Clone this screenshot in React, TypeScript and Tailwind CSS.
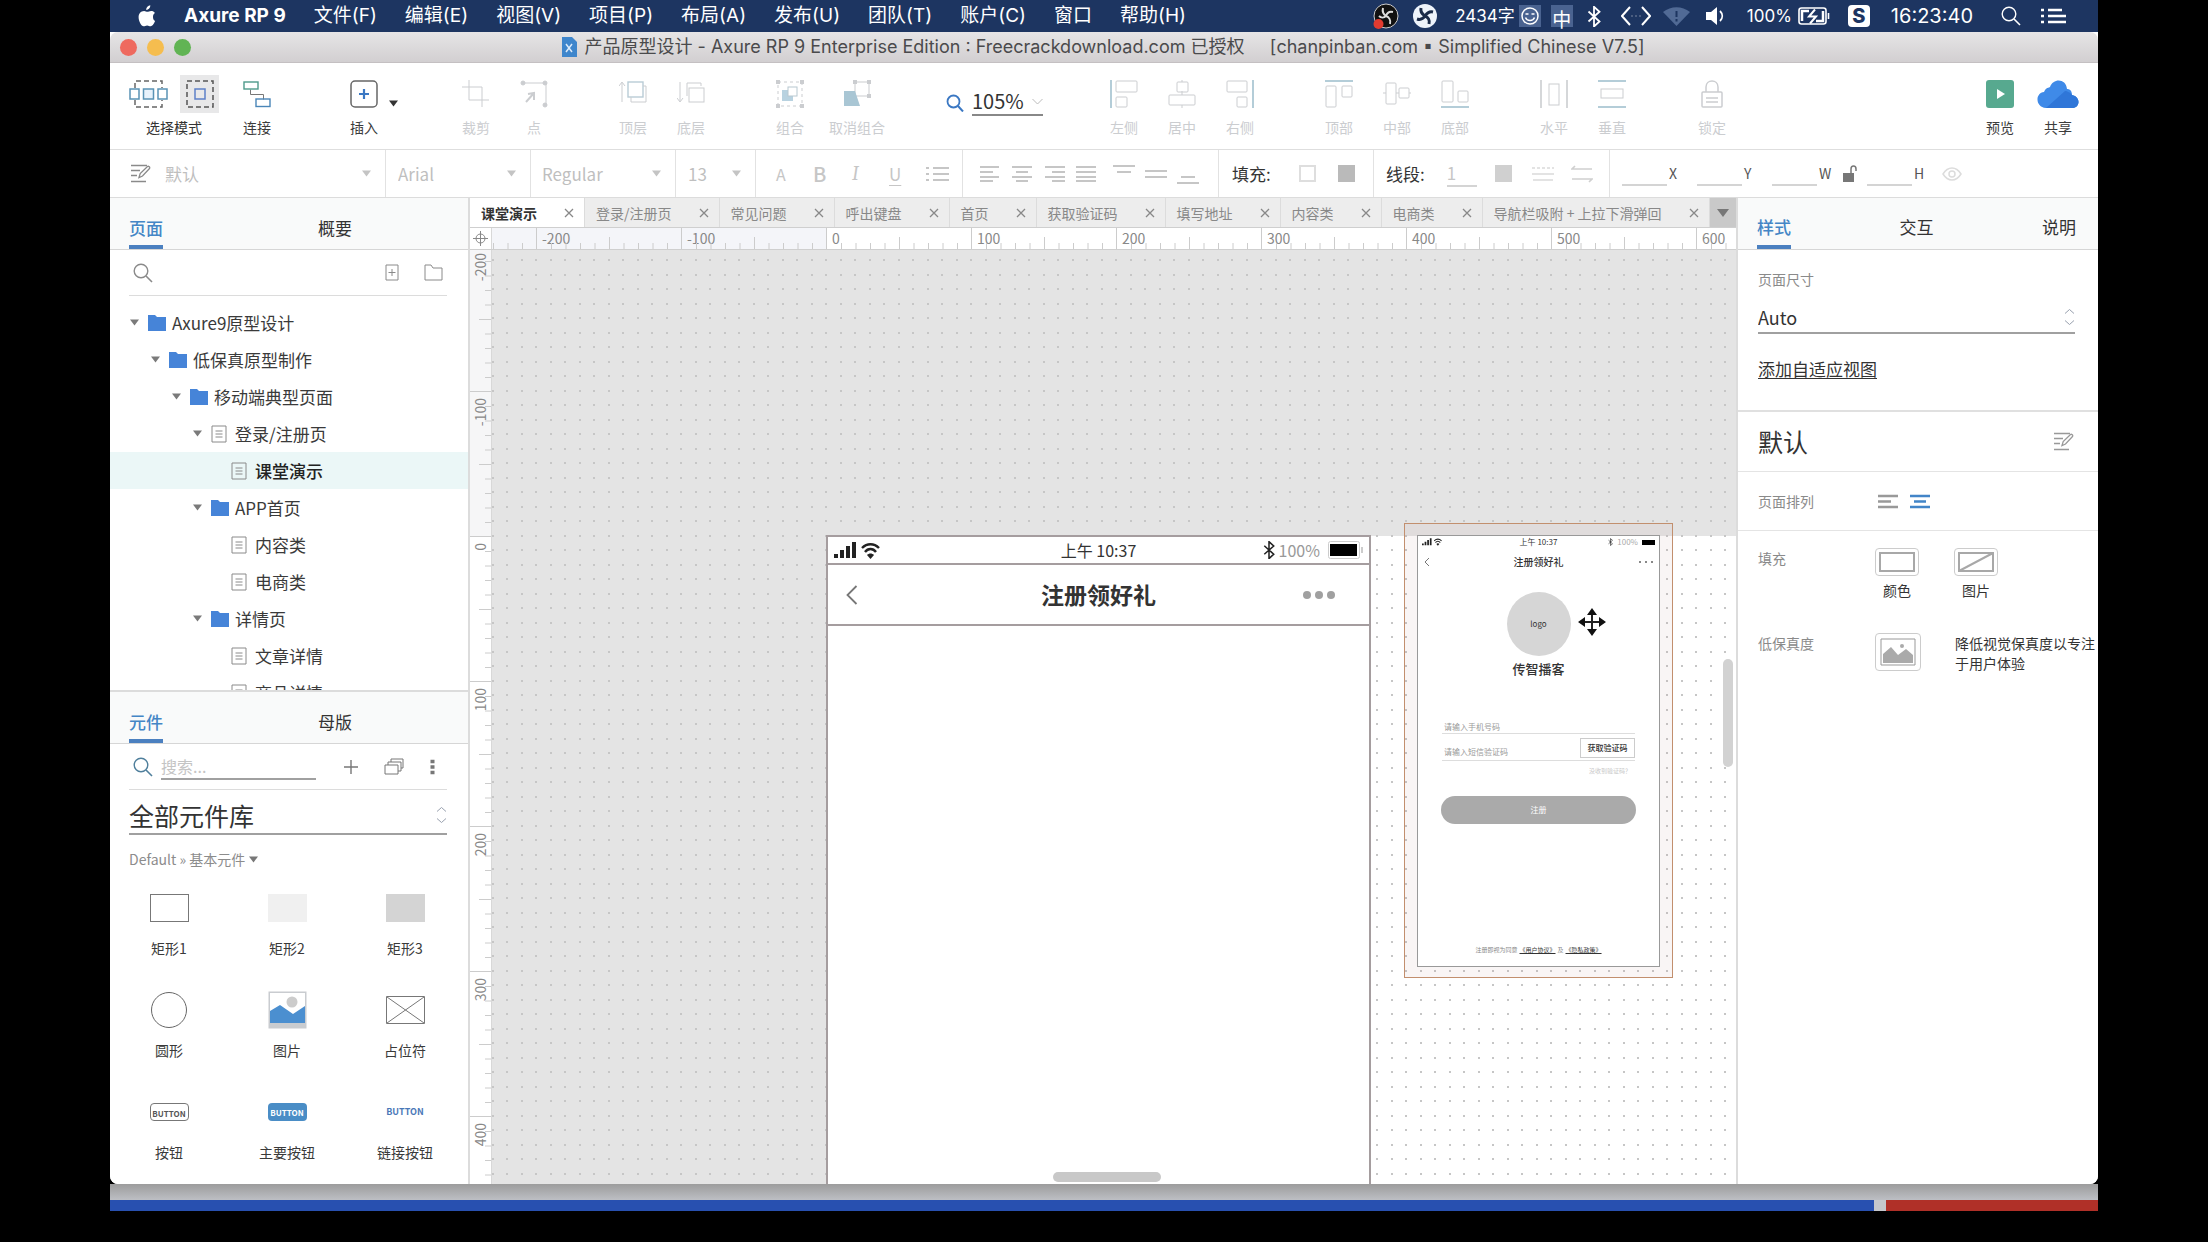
import type { ReactNode } from "react";

const menus = [
  "文件(F)",
  "编辑(E)",
  "视图(V)",
  "项目(P)",
  "布局(A)",
  "发布(U)",
  "团队(T)",
  "账户(C)",
  "窗口",
  "帮助(H)",
];

const tabs = [
  "课堂演示",
  "登录/注册页",
  "常见问题",
  "呼出键盘",
  "首页",
  "获取验证码",
  "填写地址",
  "内容类",
  "电商类",
  "导航栏吸附 + 上拉下滑弹回",
];

type TreeItem = {
  name: string;
  kind: "folder" | "page";
  indent: string;
  open?: boolean;
  active?: boolean;
};

const tree: TreeItem[] = [
  { name: "Axure9原型设计", kind: "folder", indent: "pl-5", open: true },
  { name: "低保真原型制作", kind: "folder", indent: "pl-[41px]", open: true },
  { name: "移动端典型页面", kind: "folder", indent: "pl-[62px]", open: true },
  { name: "登录/注册页", kind: "page", indent: "pl-[83px]", open: true },
  { name: "课堂演示", kind: "page", indent: "pl-[103px]", active: true },
  { name: "APP首页", kind: "folder", indent: "pl-[83px]", open: true },
  { name: "内容类", kind: "page", indent: "pl-[103px]" },
  { name: "电商类", kind: "page", indent: "pl-[103px]" },
  { name: "详情页", kind: "folder", indent: "pl-[83px]", open: true },
  { name: "文章详情", kind: "page", indent: "pl-[103px]" },
  { name: "商品详情", kind: "page", indent: "pl-[103px]" },
];

const rulerX = [-300, -200, -100, 0, 100, 200, 300, 400, 500, 600];
const rulerY = [-200, -100, 0, 100, 200, 300, 400];
const tickSteps = [1, 2, 3, 4, 5, 6, 7, 8, 9];

function Svg({
  w = 28,
  h = 28,
  className = "",
  children,
}: {
  w?: number;
  h?: number;
  className?: string;
  children: ReactNode;
}) {
  return (
    <svg
      width={w}
      height={h}
      viewBox={`0 0 ${w} ${h}`}
      fill="none"
      stroke="currentColor"
      aria-hidden="true"
      className={`shrink-0 ${className}`}
    >
      {children}
    </svg>
  );
}

function Caret({ className = "" }: { className?: string }) {
  return (
    <Svg w={9} h={7} className={className}>
      <path d="M0 .5h9L4.5 6.5z" fill="currentColor" stroke="none" />
    </Svg>
  );
}

function SearchIcon({ className = "" }: { className?: string }) {
  return (
    <Svg w={20} h={20} className={className}>
      <circle cx="8" cy="8" r="6.8" strokeWidth="1.400" />
      <path d="M13 13l6 6" strokeWidth="1.600" />
    </Svg>
  );
}

function UpDown() {
  return (
    <Svg w={11} h={18} className="pointer-events-none text-gray-400">
      <path d="M1 5.5l4.500-4 4.500 4M1 12.500l4.500 4 4.500-4" />
    </Svg>
  );
}

function StyleIcon({ className = "" }: { className?: string }) {
  return (
    <Svg w={21} h={19} className={className}>
      <path d="M1 1.500h16M1 6.500h9M1 11.500h6M1 17.500h15" strokeWidth="1.400" />
      <path d="M9 13.500l1.200-4L17.500 2.500c1-.8 3 1 2 2L12.500 12z" strokeWidth="1.300" />
    </Svg>
  );
}

function BluetoothIcon({ w, h }: { w: number; h: number }) {
  return (
    <svg width={w} height={h} viewBox="0 0 14 21" fill="none" stroke="currentColor" strokeWidth="1.8" aria-hidden="true">
      <path d="M1.500 5.500l11 10-5.500 5V.8l5.500 5-11 9.700" />
    </svg>
  );
}

function MenuBar() {
  return (
    <header className="flex h-8 shrink-0 items-center whitespace-nowrap bg-[#1d3561] pl-7 font-[Inter,'Noto_Sans_CJK_SC',sans-serif] text-[19px] leading-8 text-white">
      <svg width="18" height="22" viewBox="0 0 18 22" fill="#fff" aria-hidden="true" className="mr-7 shrink-0">
        <path d="M12.300.300c.2 2.400-2 4.700-4 4.600C8 2.700 10.200.600 12.300.300zM15 11.500c0-2.300 1.700-3.400 2-3.600-1.200-1.700-3-2-3.700-2-1.600-.1-3 .9-3.900.9s-2-.9-3.300-.9C2.800 6 .6 8.400.6 12.200c0 4 2.700 9 5 9 1.300 0 1.900-.8 3.500-.8s2.100.8 3.500.8c2.300 0 4-3.900 4.500-5.200-1.700-.8-2.100-2.600-2.100-4.500z" />
      </svg>
      <span className="mr-7 font-bold">Axure RP 9</span>
      <nav className="flex gap-7">
        {menus.map((menu) => (
          <button key={menu}>{menu}</button>
        ))}
      </nav>
      <div className="ml-auto mr-8 flex items-center">
        <svg width="26" height="26" viewBox="0 0 26 26" aria-hidden="true">
          <circle cx="13" cy="13" r="12" fill="#111" stroke="#ccc" />
          <path d="M10 5c-1 4 0 6 3 8M20 9c-4-1-6 1-7 4M13 13c-2 2-5 2-7 0M13 13c3 1 5 4 4 8" fill="none" stroke="#ddd" strokeWidth="2" />
          <circle cx="5.500" cy="21" r="5" fill="#e23b30" />
        </svg>
        <svg width="24" height="24" viewBox="0 0 24 24" aria-hidden="true" className="ml-[14px]">
          <circle cx="12" cy="12" r="12" fill="#eef4fb" />
          <path d="M8 4c-1 4 1 6 4 8M20 8c-4-1-6 1-8 4M12 12c-2 3-5 4-8 3M12 12c3 1 5 4 4 8" fill="none" stroke="#1a2b48" strokeWidth="3" />
        </svg>
        <span className="ml-[18px] text-[17px]">2434字</span>
        <span className="ml-1 grid size-[22px] place-items-center bg-[#4a6390]">
          <svg width="18" height="18" viewBox="0 0 18 18" fill="none" stroke="#fff" strokeWidth="1.500" aria-hidden="true">
            <circle cx="9" cy="9" r="8" />
            <path d="M4.500 10.500c1.500 4 7.500 4 9 0M4.500 7h3M10.500 7h3" />
          </svg>
        </span>
        <span className="ml-[10px] grid size-[22px] place-items-center bg-[#4a6390]">中</span>
        <span className="ml-[14px]">
          <BluetoothIcon w={14} h={21} />
        </span>
        <Svg w={30} h={20} className="ml-5">
          <path d="M9 1L1 10l8 9M21 1l8 9-8 9" strokeWidth="2" />
          <path d="M10 10h10" strokeDasharray="2 2" opacity=".4" />
        </Svg>
        <svg width="27" height="19" viewBox="0 0 27 19" aria-hidden="true" className="ml-3">
          <path d="M0 5C8-1.500 19-1.500 27 5L13.500 19z" fill="#516a95" />
          <path d="M13.500 4v6M13.500 12v2.500" stroke="#1d3561" strokeWidth="2" />
        </svg>
        <svg width="19" height="18" viewBox="0 0 19 18" aria-hidden="true" className="ml-4">
          <path d="M0 5h5l6-5v18l-6-5H0z" fill="#fff" />
          <path d="M14 4c3 3 3 7 0 10" fill="none" stroke="#fff" strokeWidth="1.800" />
        </svg>
        <span className="ml-[22px] text-[17px]">100%</span>
        <svg width="32" height="18" viewBox="0 0 32 18" fill="none" stroke="#fff" strokeWidth="1.600" aria-hidden="true" className="ml-[6px]">
          <rect x="1" y="1" width="27" height="16" rx="2.500" />
          <path d="M4 14V4h7M25 4v10h-7" strokeWidth="2.500" />
          <path d="M17 2.500l-6 7h7l-6 7" strokeWidth="2" />
          <path d="M30.500 6v6" />
        </svg>
        <span className="ml-[18px] grid size-[22px] place-items-center rounded bg-white text-xl font-extrabold leading-none text-[#1d3561]">
          S
        </span>
        <span className="ml-[21px] text-xl">16:23:40</span>
        <SearchIcon className="ml-7" />
        <Svg w={25} h={16} className="ml-5">
          <path d="M7 2h14M7 8h18M7 14h18M0 2h3M0 8h3M0 14h3" strokeWidth="2.400" />
        </Svg>
      </div>
    </header>
  );
}

function TitleBar() {
  return (
    <div className="flex h-[31px] shrink-0 items-center rounded-t-lg border-b border-[#c4c0c2] bg-linear-to-b from-[#e6e5e6] to-[#d2cfd1] pl-[10px]">
      <div className="flex gap-[10px]">
        <span className="size-[17px] rounded-full bg-[#ee6a5f]" />
        <span className="size-[17px] rounded-full bg-[#f5bd4f]" />
        <span className="size-[17px] rounded-full bg-[#61b454]" />
      </div>
      <div className="flex flex-1 items-center justify-center gap-2 whitespace-pre pr-[84px] font-[Inter,'Noto_Sans_CJK_SC',sans-serif] text-lg leading-[30px] text-[#4a4a4c]">
        <svg width="16" height="20" viewBox="0 0 16 20" aria-hidden="true">
          <path d="M1 0h10l5 5v15H1z" fill="#3f86cc" />
          <path d="M5 7l6 8M11 7l-6 8" stroke="#dcebfa" strokeWidth="1.500" />
        </svg>
        <span>{"产品原型设计 - Axure RP 9 Enterprise Edition : Freecrackdownload.com 已授权     [chanpinban.com ▪ Simplified Chinese V7.5]"}</span>
      </div>
    </div>
  );
}

function Tool({
  label,
  disabled = false,
  wide = false,
  children,
}: {
  label: string;
  disabled?: boolean;
  wide?: boolean;
  children: ReactNode;
}) {
  return (
    <button
      disabled={disabled}
      className={`flex flex-col items-center gap-[9px] pt-[17px] text-sm leading-5 ${wide ? "w-[76px]" : "w-[58px]"} ${
        disabled ? "text-[#cbcdd0]" : "text-[#3c3c3c]"
      }`}
    >
      <span className="flex h-7 items-center">{children}</span>
      {label}
    </button>
  );
}

function Toolbar() {
  return (
    <div className="flex h-[87px] shrink-0 whitespace-nowrap border-b border-[#dedede] bg-white pl-[10px]">
      <div className="flex w-[108px] flex-col items-center">
        <div className="flex h-[54px] items-center gap-3 pt-2">
          <button aria-label="相交选中" className="text-[#666]">
            <Svg w={39} h={28}>
              <path d="M6 8V1h27v7M6 20v7h27v-7" strokeWidth="1.500" strokeDasharray="5 3" />
              <g stroke="#5a93b5" strokeWidth="1.500" fill="#fff">
                <rect x="1" y="9" width="9" height="10" />
                <rect x="14.500" y="9" width="10" height="10" fill="#e8f2fb" />
                <rect x="29" y="9" width="9" height="10" />
              </g>
            </Svg>
          </button>
          <button aria-label="包含选中" className="grid h-[38px] w-[39px] place-items-center bg-[#e8e8e9] text-[#555]">
            <Svg>
              <rect x="1" y="1" width="26" height="26" strokeWidth="1.500" strokeDasharray="5 3" />
              <rect x="9" y="9" width="10" height="10" stroke="#5d80c8" strokeWidth="1.500" />
            </Svg>
          </button>
        </div>
        <span className="text-sm leading-5">选择模式</span>
      </div>
      <Tool label="连接">
        <Svg>
          <path d="M7.500 9.500v5h13v5" stroke="#777" />
          <rect x="1" y="2" width="14" height="7" stroke="#4f9a8b" strokeWidth="1.400" />
          <rect x="13" y="19" width="14" height="7.500" stroke="#4a86b8" strokeWidth="1.400" />
        </Svg>
      </Tool>
      <div className="ml-[49px] flex">
        <Tool label="插入">
          <Svg>
            <rect x="1" y="1" width="26" height="26" rx="4" stroke="#666" strokeWidth="1.500" />
            <path d="M14 9v10M9 14h10" stroke="#3b78c3" strokeWidth="2.200" />
          </Svg>
        </Tool>
        <Caret className="-ml-1 mt-[37px] text-[#333]" />
      </div>
      <div className="ml-[49px] flex">
        <Tool label="裁剪" disabled>
          <Svg>
            <path d="M7 0v20h20M0 7h20v20" />
          </Svg>
        </Tool>
        <Tool label="点" disabled>
          <Svg>
            <path d="M2 3h24v23" />
            <path d="M6 22L14 13M8 14l6-1v7" strokeWidth="2" />
            <circle cx="3" cy="3" r="2" fill="currentColor" />
            <circle cx="25" cy="3" r="2" fill="currentColor" />
            <circle cx="25" cy="25" r="2" fill="currentColor" />
          </Svg>
        </Tool>
      </div>
      <div className="ml-[41px] flex">
        <Tool label="顶层" disabled>
          <Svg>
            <path d="M3 22V3M0 6l3-4 3 4" />
            <rect x="9" y="2" width="15" height="15" stroke="#b9ccd6" strokeWidth="1.400" />
            <path d="M12 17v5h15V6h-3" />
          </Svg>
        </Tool>
        <Tool label="底层" disabled>
          <Svg>
            <path d="M3 2v19M0 18l3 4 3-4" />
            <path d="M10 16V3h14v3" />
            <rect x="12" y="8" width="15" height="14" />
          </Svg>
        </Tool>
      </div>
      <div className="ml-[41px] flex">
        <Tool label="组合" disabled>
          <Svg>
            <rect x="2" y="2" width="24" height="24" strokeDasharray="3 3" />
            <rect x="6" y="10" width="11" height="11" fill="#b8d2e0" stroke="none" />
            <rect x="12" y="7" width="9" height="9" fill="#fff" stroke="#b8c8d0" />
            <path d="M0 2h4M24 2h4M0 26h4M24 26h4" strokeWidth="4" />
          </Svg>
        </Tool>
        <Tool label="取消组合" disabled wide>
          <Svg>
            <rect x="12" y="2" width="14" height="14" />
            <path d="M1 11h11l5 15H1z" fill="#a9c6d4" stroke="none" />
            <path d="M10 2h4M24 2h4M24 16h4" strokeWidth="4" />
          </Svg>
        </Tool>
      </div>
      <div className="ml-[51px] flex h-[53px] w-24 items-end">
        <Svg w={18} h={18} className="mb-1 text-[#3b78c3]">
          <circle cx="7.500" cy="7.500" r="6" strokeWidth="1.800" />
          <path d="M12 12l5 5.500" strokeWidth="2" />
        </Svg>
        <label className="ml-2 flex flex-1 items-center border-b-2 border-[#888]">
          <input aria-label="缩放" defaultValue="105%" className="w-[60px] bg-transparent text-xl leading-[26px] text-[#333] outline-none" />
          <Svg w={11} h={7} className="text-[#bbb]">
            <path d="M.5 1l5 5 5-5" />
          </Svg>
        </label>
      </div>
      <div className="ml-[53px] flex">
        <Tool label="左侧" disabled>
          <Svg>
            <path d="M1 0v28" stroke="#b4cdd8" strokeWidth="2" />
            <rect x="6" y="1" width="21" height="11" rx="1" />
            <rect x="6" y="17" width="11" height="10" rx="1" />
          </Svg>
        </Tool>
        <Tool label="居中" disabled>
          <Svg>
            <path d="M14 0v2M14 11v4M14 25v3" />
            <rect x="9" y="2" width="11" height="10" rx="1" />
            <rect x="1" y="15" width="26" height="10" rx="1" />
          </Svg>
        </Tool>
        <Tool label="右侧" disabled>
          <Svg>
            <path d="M27 0v28" stroke="#b4cdd8" strokeWidth="2" />
            <rect x="1" y="1" width="20" height="11" rx="1" />
            <rect x="11" y="17" width="10" height="10" rx="1" />
          </Svg>
        </Tool>
      </div>
      <div className="ml-[41px] flex">
        <Tool label="顶部" disabled>
          <Svg>
            <path d="M0 1h28" stroke="#b4cdd8" strokeWidth="2" />
            <rect x="1" y="6" width="10" height="21" rx="1" />
            <rect x="17" y="6" width="10" height="11" rx="1" />
          </Svg>
        </Tool>
        <Tool label="中部" disabled>
          <Svg>
            <path d="M0 13h3M13 13h3M26 13h2" />
            <rect x="3" y="3" width="10" height="21" rx="1" />
            <rect x="16" y="8" width="10" height="10" rx="1" />
          </Svg>
        </Tool>
        <Tool label="底部" disabled>
          <Svg>
            <path d="M0 27h28" stroke="#b4cdd8" strokeWidth="2" />
            <rect x="1" y="1" width="11" height="21" rx="1" />
            <rect x="17" y="11" width="10" height="11" rx="1" />
          </Svg>
        </Tool>
      </div>
      <div className="ml-[41px] flex">
        <Tool label="水平" disabled>
          <Svg>
            <path d="M1 0v28M27 0v28" strokeWidth="1.600" />
            <rect x="9" y="4" width="10" height="21" />
          </Svg>
        </Tool>
        <Tool label="垂直" disabled>
          <Svg>
            <path d="M0 1h28M0 27h28" stroke="#b4cdd8" strokeWidth="1.800" />
            <rect x="3" y="9" width="22" height="9" />
          </Svg>
        </Tool>
      </div>
      <div className="ml-[42px] flex">
        <Tool label="锁定" disabled>
          <Svg>
            <path d="M8 12V7c0-8 12-8 12 0v5" strokeWidth="1.500" />
            <rect x="4" y="12" width="20" height="15" rx="1" strokeWidth="1.500" />
            <path d="M8 18h12M8 22h12" strokeWidth="1.500" />
          </Svg>
        </Tool>
      </div>
      <div className="ml-auto mr-[11px] flex">
        <Tool label="预览">
          <Svg>
            <rect width="28" height="28" rx="3" fill="#57a98f" stroke="none" />
            <path d="M11 9l8 5-8 5z" fill="#fff" stroke="none" />
          </Svg>
        </Tool>
        <Tool label="共享">
          <Svg w={42} h={28}>
            <path d="M9 28C-2 27-2 13 7 12 9 7 12 8 13 7c3-9 16-9 17 2 3 0 5 2 5 6 9 2 8 12 1 13z" fill="#3f8ae8" stroke="none" />
            <path d="M9 28L28 11c2 0 6 2 7 4 9 2 8 12 1 13z" fill="#2f76d8" stroke="none" />
          </Svg>
        </Tool>
      </div>
    </div>
  );
}

function FormatSelect({ label, value, className }: { label: string; value: string; className: string }) {
  return (
    <label className={`flex items-center border-r border-[#e2e2e2] pr-[14px] ${className}`}>
      <select
        aria-label={label}
        className="min-w-0 flex-1 appearance-none bg-transparent text-[17px] text-[#bfbfbf] outline-none"
      >
        <option>{value}</option>
      </select>
      <Caret className="pointer-events-none text-[#c4c4c4]" />
    </label>
  );
}

function Position({ name }: { name: string }) {
  return (
    <label className="flex items-end gap-[2px] text-sm leading-5 text-[#555]">
      <input aria-label={name} className="h-6 w-[45px] border-b-2 border-[#d4d4d4] bg-transparent outline-none" />
      <span className="mb-[3px] w-[14px]">{name}</span>
    </label>
  );
}

function FormatBar() {
  return (
    <div className="flex h-12 shrink-0 whitespace-nowrap border-b border-[#dcdcdc] bg-white text-[17px] text-[#c6c6c6]">
      <div className="flex w-[276px] items-center pl-5">
        <StyleIcon className="mr-[14px] text-[#8a8a8a]" />
        <FormatSelect label="样式" value="默认" className="h-full flex-1" />
      </div>
      <FormatSelect label="字体" value="Arial" className="w-[145px] pl-3" />
      <FormatSelect label="字重" value="Regular" className="w-[145px] pl-[11px]" />
      <FormatSelect label="字号" value="13" className="w-20 pl-3" />
      <div className="flex w-[207px] items-center border-r border-[#e2e2e2] pl-5">
        <button className="w-[37px] text-left text-base">A</button>
        <button className="w-[39px] text-left text-xl font-medium">B</button>
        <button className="w-[37px] text-left font-serif text-xl italic">I</button>
        <button className="w-[36px] text-left underline underline-offset-4">U</button>
        <button aria-label="项目符号">
          <Svg w={24} h={18}>
            <path d="M8 3h16M8 9h16M8 15h16M1 3h3M1 9h3M1 15h3" strokeWidth="2" />
          </Svg>
        </button>
      </div>
      <div className="flex w-[256px] items-center border-r border-[#e2e2e2] pl-[17px]">
        <button aria-label="左对齐" className="w-8">
          <Svg w={20} h={18}>
            <path d="M0 2h19M0 7h13M0 12h19M0 16h13" strokeWidth="1.800" />
          </Svg>
        </button>
        <button aria-label="居中" className="w-[33px]">
          <Svg w={20} h={18}>
            <path d="M0 2h20M4 7h12M0 12h20M4 16h12" strokeWidth="1.800" />
          </Svg>
        </button>
        <button aria-label="右对齐" className="w-[31px]">
          <Svg w={20} h={18}>
            <path d="M0 2h20M7 7h13M0 12h20M7 16h13" strokeWidth="1.800" />
          </Svg>
        </button>
        <button aria-label="两端对齐" className="w-[37px]">
          <Svg w={20} h={18}>
            <path d="M0 2h20M0 7h20M0 12h20M0 16h20" strokeWidth="1.800" />
          </Svg>
        </button>
        <button aria-label="顶端对齐" className="w-8">
          <Svg w={22} h={24}>
            <path d="M0 4h22M4 10h14" strokeWidth="2" />
          </Svg>
        </button>
        <button aria-label="垂直居中" className="w-8">
          <Svg w={22} h={24}>
            <path d="M0 9h22M0 15h22" strokeWidth="2" />
          </Svg>
        </button>
        <button aria-label="底端对齐">
          <Svg w={22} h={24}>
            <path d="M4 15h14M0 21h22" strokeWidth="2" />
          </Svg>
        </button>
      </div>
      <div className="flex w-[155px] items-center border-r border-[#e2e2e2] pl-[13px] text-[#333]">
        填充:
        <button aria-label="填充颜色" className="ml-[28px] size-[17px] border-2 border-[#dedede]" />
        <button aria-label="阴影" className="ml-[22px] size-[17px] bg-[#bababa]" />
      </div>
      <div className="flex w-[236px] items-center border-r border-[#e2e2e2] pl-3 text-[#333]">
        线段:
        <input aria-label="线宽" defaultValue="1" className="ml-[22px] w-[30px] border-b-2 border-[#d4d4d4] text-[#c6c6c6] outline-none" />
        <button aria-label="线段颜色" className="ml-[18px] size-[17px] bg-[#d0d0d0]" />
        <Svg w={22} h={18} className="ml-[20px] text-[#dadada]">
          <path d="M0 9h22M1 15h20" strokeWidth="1.600" />
          <path d="M0 3h22" strokeDasharray="3 2" strokeWidth="1.600" />
        </Svg>
        <Svg w={22} h={18} className="ml-[17px] text-[#d0d0d0]">
          <path d="M4 1L1 4h20M18 17l3-3H1" strokeWidth="1.600" />
        </Svg>
      </div>
      <div className="flex items-center gap-[14px] pl-3">
        <Position name="X" />
        <Position name="Y" />
        <Position name="W" />
        <Svg w={14} h={18} className="-mx-1 text-[#777]">
          <rect x="0" y="8" width="11" height="9" fill="currentColor" stroke="none" />
          <path d="M8 8V4c0-4 5-4 5 0v2" strokeWidth="1.500" />
        </Svg>
        <Position name="H" />
        <Svg w={20} h={16} className="text-[#dcdcdc]">
          <path d="M1 8c5-8 13-8 18 0-5 8-13 8-18 0z" strokeWidth="1.500" />
          <circle cx="10" cy="8" r="3" strokeWidth="1.500" />
        </Svg>
      </div>
    </div>
  );
}

function PanelTabs({ items, className = "" }: { items: string[]; className?: string }) {
  return (
    <div className={`flex h-[52px] shrink-0 border-b border-[#d6d6d6] bg-[#f9fafa] pl-[19px] text-[17px] ${className}`}>
      {items.map((item, i) => (
        <button
          key={item}
          className={
            i === 0
              ? "border-b-4 border-[#4b80c0] pt-3 font-medium text-[#4486c6]"
              : "border-b-4 border-transparent pt-3 text-[#333]"
          }
        >
          {item}
        </button>
      ))}
    </div>
  );
}

function PageTree() {
  return (
    <section className="flex min-h-0 flex-1 flex-col overflow-hidden">
      <PanelTabs items={["页面", "概要"]} className="gap-[155px]" />
      <div className="ml-[19px] mr-[21px] flex h-[46px] shrink-0 items-center border-b border-[#dcdcdc] px-1 text-[#8a8a8a]">
        <SearchIcon />
        <button aria-label="添加页面" className="ml-auto mr-[25px]">
          <Svg w={14} h={17}>
            <path d="M1 1h12v15H1zM7 5v7M3.500 8.500h7" />
          </Svg>
        </button>
        <button aria-label="添加文件夹">
          <Svg w={19} h={17}>
            <path d="M1 16V1h6l2 3h9v12z" />
          </Svg>
        </button>
      </div>
      <div className="min-h-0 flex-1 overflow-hidden pt-2">
        {tree.map((item) => (
          <button
            key={item.name + item.indent}
            className={`flex h-[37px] w-full items-center text-[17px] ${item.indent} ${
              item.active ? "bg-[#ebf7f7] font-medium text-[#222]" : "text-[#3a3a3a]"
            }`}
          >
            <span className="w-[18px]">{item.open && <Caret className="text-[#7a7a7a]" />}</span>
            {item.kind === "folder" ? (
              <Svg w={18} h={16} className="mr-[6px]">
                <path d="M0 0h7l2 2h9v14H0z" fill="#4684d8" stroke="none" />
              </Svg>
            ) : (
              <Svg w={16} h={18} className="mr-2 text-[#8a8a8a]">
                <path d="M1 1h14v16H1zM4.500 6h7M4.500 9h7M4.500 12h7" />
              </Svg>
            )}
            {item.name}
          </button>
        ))}
      </div>
    </section>
  );
}

const shapes: { name: string; icon: ReactNode }[] = [
  { name: "矩形1", icon: <span className="h-7 w-[39px] border border-[#777]" /> },
  { name: "矩形2", icon: <span className="h-7 w-[39px] bg-[#f0f0f0]" /> },
  { name: "矩形3", icon: <span className="h-7 w-[39px] bg-[#d4d4d4]" /> },
  { name: "圆形", icon: <span className="size-9 rounded-full border border-[#666]" /> },
  {
    name: "图片",
    icon: (
      <Svg w={39} h={38}>
        <rect x=".5" y=".5" width="38" height="37" fill="#c9ccd0" stroke="none" />
        <rect x="2" y="2" width="35" height="30" fill="#fff" stroke="none" />
        <circle cx="24" cy="11" r="5.500" fill="#ccc" stroke="none" />
        <path d="M2 20l10-6 13 9 12-8v17H2z" fill="#4b8fd0" stroke="none" />
      </Svg>
    ),
  },
  {
    name: "占位符",
    icon: (
      <Svg w={39} h={28} className="text-[#777]">
        <path d="M.5.5h38v27H.5zM1 1l37 26M38 1L1 27" />
      </Svg>
    ),
  },
  {
    name: "按钮",
    icon: (
      <span className="grid h-[18px] w-[39px] place-items-center rounded-sm border border-[#777] text-[8px] font-bold text-[#555]">
        BUTTON
      </span>
    ),
  },
  {
    name: "主要按钮",
    icon: (
      <span className="grid h-[18px] w-[39px] place-items-center rounded-sm bg-[#4a8dc6] text-[8px] font-bold text-white">
        BUTTON
      </span>
    ),
  },
  {
    name: "链接按钮",
    icon: <span className="text-[9px] font-bold text-[#4a78b8]">BUTTON</span>,
  },
];

function Library() {
  return (
    <section className="shrink-0 border-t-2 border-[#dcdcdc]">
      <PanelTabs items={["元件", "母版"]} className="gap-[155px]" />
      <div className="ml-[19px] mr-[21px] flex h-[46px] items-center border-b border-[#dcdcdc] px-1 text-[#777]">
        <SearchIcon className="text-[#4f7f9c]" />
        <input
          aria-label="搜索元件"
          placeholder="搜索..."
          className="ml-2 h-[26px] w-[155px] border-b-2 border-[#a0a0a0] text-base outline-none placeholder:text-[#c4c4c4]"
        />
        <button aria-label="添加元件库" className="ml-7">
          <Svg w={14} h={14}>
            <path d="M7 0v14M0 7h14" strokeWidth="1.400" />
          </Svg>
        </button>
        <button aria-label="元件库" className="ml-[26px]">
          <Svg w={20} h={17}>
            <path d="M1 7h13v9H1zM4 7V4h13v9h-3M7 4V1h12v9h-2" />
          </Svg>
        </button>
        <button aria-label="更多" className="ml-auto mr-2">
          <Svg w={5} h={16}>
            <path d="M.5 2.500h4M.5 8h4M.5 13.500h4" strokeWidth="3.500" />
          </Svg>
        </button>
      </div>
      <label className="ml-[19px] mr-[21px] mt-[7px] flex items-center border-b-2 border-[#a0a0a0]">
        <select aria-label="元件库" className="h-[36px] flex-1 appearance-none bg-transparent text-[25px] leading-[36px] text-[#333] outline-none">
          <option>全部元件库</option>
        </select>
        <UpDown />
      </label>
      <button className="ml-[19px] mt-3 flex h-6 items-center text-sm text-[#8c8c8c]">
        Default » 基本元件
        <Caret className="ml-1 text-[#777]" />
      </button>
      <div className="mt-[17px] grid grid-cols-3 gap-y-8 pb-[22px] pr-1 text-sm leading-5 text-[#3a3a3a]">
        {shapes.map((shape) => (
          <button key={shape.name} className="flex flex-col items-center gap-[10px]">
            <span className="flex h-[40px] items-center">{shape.icon}</span>
            {shape.name}
          </button>
        ))}
      </div>
    </section>
  );
}

function DocumentTabs() {
  return (
    <div className="flex h-[30px] shrink-0 overflow-hidden whitespace-nowrap border-b border-[#cfcfcf] bg-[#ededed] text-sm">
      {tabs.map((tab, i) => (
        <div
          key={tab}
          className={`flex shrink-0 items-center border-r border-[#dcdcdc] pl-[11px] pr-[10px] ${
            i === 0 ? "bg-white font-bold text-[#333]" : "text-[#888]"
          }`}
        >
          <button>{tab}</button>
          <button aria-label={`关闭 ${tab}`} className="ml-[27px]">
            <Svg w={10} h={10} className="text-[#888]">
              <path d="M1 1l8 8M9 1L1 9" strokeWidth="1.300" />
            </Svg>
          </button>
        </div>
      ))}
      <button aria-label="全部标签" className="ml-auto grid w-[30px] place-items-center bg-[#c9c9c9] text-[#777]">
        <Svg w={12} h={8}>
          <path d="M0 0h12L6 8z" fill="currentColor" stroke="none" />
        </Svg>
      </button>
    </div>
  );
}

function HorizontalRuler() {
  return (
    <div className="flex h-[22px] shrink-0 border-b border-[#cfcfcf] bg-white text-sm leading-5 text-[#888]">
      <div className="grid w-[22px] shrink-0 place-items-center border-r border-[#d8d8d8]">
        <Svg w={15} h={15}>
          <circle cx="7.500" cy="7.500" r="4.500" />
          <path d="M7.500 0v15M0 7.500h15" />
        </Svg>
      </div>
      <div className="min-w-0 flex-1 overflow-hidden">
        <div className="-ml-[101px] flex">
          {rulerX.map((n, i) => (
            <div
              key={n}
              className={`relative h-[21px] w-[145px] shrink-0 border-l border-[#ccc] pl-[5px] ${n < 0 ? "bg-[#f4f5f9]" : ""}`}
            >
              {i > 0 && n}
              <svg width="145" height="21" className="absolute bottom-0 left-0" stroke="#ccc" aria-hidden="true">
                {tickSteps.map((t) => (
                  <path key={t} d={`M${t * 14.5} ${t === 5 ? 9 : 15}V21`} />
                ))}
              </svg>
            </div>
          ))}
        </div>
      </div>
    </div>
  );
}

function VerticalRuler() {
  return (
    <div className="w-[22px] shrink-0 overflow-hidden border-r border-[#d8d8d8] text-sm text-[#888]">
      <div className="-mt-1">
        {rulerY.map((n) => (
          <div key={n} className={`relative h-[145px] border-t border-[#ccc] pt-[6px] ${n < 0 ? "bg-[#f6f6f7]" : ""}`}>
            <span className="block w-5 rotate-180 leading-[20px] [writing-mode:vertical-rl]">{n}</span>
            <svg width="21" height="145" className="absolute left-0 top-0" stroke="#ccc" aria-hidden="true">
              {tickSteps.map((t) => (
                <path key={t} d={`M${t === 5 ? 9 : 15} ${t * 14.5}H21`} />
              ))}
            </svg>
          </div>
        ))}
      </div>
    </div>
  );
}

function Signal({ w, h }: { w: number; h: number }) {
  return (
    <svg width={w} height={h} viewBox="0 0 46 17" aria-hidden="true">
      <path d="M0 12h4v4H0zM6 8h4v8H6zM12 4h4v12h-4zM18 0h4v16h-4z" fill="#222" />
      <path d="M28 6c5-5 12-5 17 0M31 10c3-4 8-4 11 0" fill="none" stroke="#222" strokeWidth="2.400" />
      <path d="M33 13c2-2 5-2 7 0l-3.500 4z" fill="#222" />
    </svg>
  );
}

function PhoneScreen() {
  return (
    <div className="absolute bottom-0 left-[334px] top-[285px] w-[545px] border-2 border-b-0 border-[#a59d9f] bg-white text-[#333]">
      <div className="grid h-7 grid-cols-3 items-center border-b-2 border-[#a59d9f] px-[6px]">
        <Signal w={46} h={17} />
        <span className="text-center text-base leading-[26px]">上午 10:37</span>
        <span className="flex items-center justify-end gap-1 text-base leading-[26px] text-[#999]">
          <span className="text-[#222]">
            <BluetoothIcon w={12} h={18} />
          </span>
          100%
          <Svg w={35} h={18} className="ml-1">
            <rect x=".5" y=".5" width="31" height="17" rx="2" stroke="#ccc" />
            <rect x="2" y="3" width="27" height="12" fill="#000" stroke="none" />
            <path d="M34 6v6" />
          </Svg>
        </span>
      </div>
      <div className="grid h-[61px] grid-cols-3 items-center border-b-2 border-[#a59d9f] px-[18px]">
        <Svg w={12} h={20} className="text-[#777]">
          <path d="M10.500 1L1.500 10l9 9" strokeWidth="1.800" />
        </Svg>
        <span className="text-center text-[23px] font-bold">注册领好礼</span>
        <span className="mr-4 flex justify-end gap-1">
          <i className="size-2 rounded-full bg-[#a0a0a0]" />
          <i className="size-2 rounded-full bg-[#a0a0a0]" />
          <i className="size-2 rounded-full bg-[#a0a0a0]" />
        </span>
      </div>
    </div>
  );
}

function RegisterMock() {
  return (
    <div className="absolute left-[912px] top-[273px] h-[455px] w-[269px] border border-[#c28f6e] bg-[#c79f9f]/10 px-3 pt-[11px]">
      <div className="flex h-[432px] flex-col border border-[#999] bg-white text-[8px] leading-3 text-[#333]">
        <div className="grid h-3 grid-cols-3 items-center px-1">
          <Signal w={20} h={8} />
          <span className="text-center">上午 10:37</span>
          <span className="flex items-center justify-end gap-1 text-[#aaa]">
            <span className="text-[#222]">
              <BluetoothIcon w={5} h={8} />
            </span>
            100%
            <i className="h-[5px] w-[13px] bg-black" />
          </span>
        </div>
        <div className="grid h-7 grid-cols-3 items-center px-[6px]">
          <Svg w={6} h={10} className="text-[#777]">
            <path d="M5 1L1 5l4 4" />
          </Svg>
          <span className="text-center text-[10px] font-medium">注册领好礼</span>
          <span className="flex justify-end gap-1">
            <i className="size-[2px] bg-[#888]" />
            <i className="size-[2px] bg-[#888]" />
            <i className="size-[2px] bg-[#888]" />
          </span>
        </div>
        <div className="mt-4 grid size-16 place-items-center self-center rounded-full bg-[#d6d6d6]">logo</div>
        <p className="mt-[3px] text-center text-[13px] font-medium leading-5">传智播客</p>
        <div className="mt-10 flex flex-col px-6">
          <input
            aria-label="手机号码"
            placeholder="请输入手机号码"
            className="h-[15px] border-b border-[#ddd] pl-[2px] outline-none placeholder:text-[#999]"
          />
          <div className="mt-1 flex h-[23px] border-b border-[#ddd]">
            <input
              aria-label="短信验证码"
              placeholder="请输入短信验证码"
              className="mt-[6px] min-w-0 flex-1 pl-[2px] outline-none placeholder:text-[#999]"
            />
            <button className="h-5 w-[55px] border border-[#ccc] font-medium">获取验证码</button>
          </div>
          <a href="#help" className="mr-1 mt-1 self-end text-[6px] text-[#c8c8c8]">
            没收到验证码？
          </a>
          <button className="-mx-px mt-[19px] h-7 rounded-full bg-[#aaa] text-white">注册</button>
        </div>
        <p className="mb-[10px] mt-auto text-center text-[6px] leading-3 text-[#888]">
          注册即视为同意
          <a href="#terms" className="ml-[2px] text-[#333] underline">
            《用户协议》
          </a>
          <span className="mx-[2px]">及</span>
          <a href="#privacy" className="text-[#333] underline">
            《隐私政策》
          </a>
        </p>
      </div>
    </div>
  );
}

function Canvas() {
  return (
    <div className="relative min-w-0 flex-1 overflow-hidden bg-[#e4e4e4]">
      <div className="absolute bottom-0 left-[334px] right-0 top-[286px] bg-white" />
      <svg width="100%" height="100%" className="absolute inset-0" aria-hidden="true">
        <defs>
          <pattern id="dots" x="14" y="24" width="29" height="29" patternUnits="userSpaceOnUse">
            <path d="M0 0h2v2H0zM15 0h2v2h-2zM0 14h2v2H0zM15 14h2v2h-2z" fill="#c6c6c6" />
          </pattern>
        </defs>
        <rect width="100%" height="100%" fill="url(#dots)" />
      </svg>
      <PhoneScreen />
      <RegisterMock />
      <svg width="28" height="28" viewBox="0 0 28 28" className="absolute left-[1086px] top-[358px]" aria-hidden="true">
        <path d="M14 4v20M4 14h20" stroke="#222" strokeWidth="2" />
        <path d="M14 0l5 7H9zM14 28l5-7H9zM0 14l7-5v10zM28 14l-7-5v10z" fill="#111" />
      </svg>
      <div className="absolute right-[3px] top-[409px] h-[108px] w-[10px] rounded-full bg-[#d2d2d2]" />
      <div className="absolute bottom-[2px] left-[561px] h-[10px] w-[108px] rounded-full bg-[#c8c8c8]" />
    </div>
  );
}

function Inspector() {
  return (
    <aside className="flex w-[362px] shrink-0 flex-col border-l-2 border-[#dcdcdc] bg-white text-sm text-[#8a8a8a]">
      <PanelTabs items={["样式", "交互", "说明"]} className="justify-between pr-[22px]" />
      <div className="border-b-2 border-[#e0e0e0] pl-5 pr-[23px] pt-[19px]">
        <label htmlFor="page-size" className="block leading-5">
          页面尺寸
        </label>
        <div className="mt-[13px] flex h-8 items-center border-b-2 border-[#a0a0a0]">
          <select id="page-size" className="flex-1 appearance-none bg-transparent text-lg leading-6 text-[#333] outline-none">
            <option>Auto</option>
          </select>
          <UpDown />
        </div>
        <a href="#adaptive" className="mb-[29px] mt-[23px] inline-block text-[17px] leading-6 text-[#333] underline underline-offset-2">
          添加自适应视图
        </a>
      </div>
      <div className="flex h-[60px] items-center justify-between border-b border-[#e4e4e4] pl-5 pr-[24px]">
        <h2 className="text-[25px] text-[#333]">默认</h2>
        <StyleIcon className="text-[#999]" />
      </div>
      <div className="flex h-[59px] items-center border-b border-[#e4e4e4] pl-5">
        <span className="w-[120px]">页面排列</span>
        <button aria-label="页面左对齐" className="text-[#999]">
          <Svg w={20} h={15}>
            <path d="M0 2h20M0 7.500h13M0 13h20" strokeWidth="2.400" />
          </Svg>
        </button>
        <button aria-label="页面居中" className="ml-3 text-[#4285c8]">
          <Svg w={20} h={15}>
            <path d="M0 2h20M4 7.500h12M0 13h20" strokeWidth="2.400" />
          </Svg>
        </button>
      </div>
      <div className="flex pl-5 pt-[17px] leading-5">
        <span className="w-[117px]">填充</span>
        <button className="flex w-[44px] flex-col items-center gap-1 text-[#333]">
          <span className="grid h-7 w-[44px] place-items-center rounded-sm border border-[#ccc]">
            <span className="h-5 w-9 border-2 border-[#a8a8a8]" />
          </span>
          颜色
        </button>
        <button className="ml-[35px] flex w-[44px] flex-col items-center gap-1 text-[#333]">
          <span className="grid h-7 w-[44px] place-items-center rounded-sm border border-[#ccc]">
            <Svg w={36} h={20} className="text-[#a8a8a8]">
              <path d="M1 1h34v18H1zM1 19L35 1" strokeWidth="2" />
            </Svg>
          </span>
          图片
        </button>
      </div>
      <div className="mt-[33px] flex pl-5 leading-5">
        <span className="w-[117px]">低保真度</span>
        <button aria-label="切换低保真度" className="grid h-[38px] w-[46px] place-items-center rounded-sm border border-[#ccc]">
          <Svg w={36} h={28} className="text-[#999]">
            <path d="M1 1h34v26H1z" />
            <path d="M3 25v-9l8-7 7 8 8-6 7 6v8z" fill="#aaa" stroke="none" />
            <circle cx="22" cy="8" r="2" fill="#aaa" stroke="none" />
          </Svg>
        </button>
        <p className="ml-[34px] flex-1 text-[#333]">降低视觉保真度以专注于用户体验</p>
      </div>
    </aside>
  );
}

export default function App() {
  return (
    <div
      lang="zh-CN"
      className="flex h-screen flex-col bg-black px-[110px] pb-[31px] font-['Noto_Sans_CJK_SC','Noto_Sans',sans-serif] text-[#333]"
    >
      <MenuBar />
      <div className="flex min-h-0 flex-1 flex-col overflow-hidden rounded-b-lg bg-white">
        <TitleBar />
        <Toolbar />
        <FormatBar />
        <main className="flex min-h-0 flex-1">
          <aside className="flex w-[360px] shrink-0 flex-col border-r-2 border-[#dcdcdc] bg-white">
            <PageTree />
            <Library />
          </aside>
          <div className="flex min-w-0 flex-1 flex-col">
            <DocumentTabs />
            <HorizontalRuler />
            <div className="flex min-h-0 flex-1">
              <VerticalRuler />
              <Canvas />
            </div>
          </div>
          <Inspector />
        </main>
      </div>
      <div className="h-4 shrink-0 bg-linear-to-b from-[#9c9c9c] to-[#bdbfc4]" />
      <div className="flex h-[11px] shrink-0 bg-[#c5c7cc]">
        <div className="flex-1 bg-[#2850b0]" />
        <div className="ml-3 w-[212px] bg-[#b03028]" />
      </div>
    </div>
  );
}
